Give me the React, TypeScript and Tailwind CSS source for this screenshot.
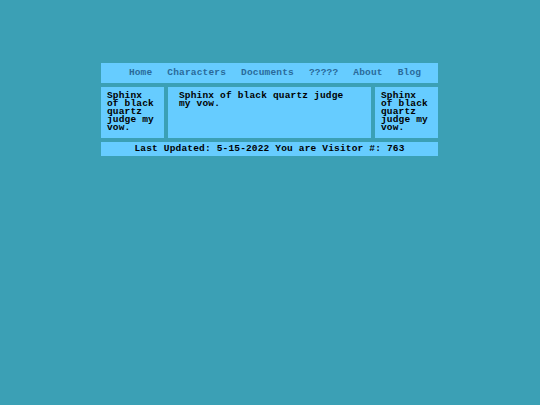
export default function App() {
  const pangram = "Sphinx of black quartz judge my vow.";
  return (
    <div
      className="min-h-screen bg-[#3ba0b5] text-black text-[9.5px] leading-[8px] tracking-[0.17px]"
      style={{ fontFamily: '"Liberation Mono", "DejaVu Sans Mono", monospace' }}
    >
      <div className="w-[337px] ml-[101px] pt-[63px] flex flex-col gap-[4px]">
        <nav className="h-[20px] bg-[#66ccff] flex items-center justify-center gap-[15px] pl-[11px] font-bold text-[#2a6a9a]">
          <a>Home</a>
          <a>Characters</a>
          <a>Documents</a>
          <a>?????</a>
          <a>About</a>
          <a>Blog</a>
        </nav>
        <div className="flex gap-[4px] h-[51px]">
          <aside className="w-[63px] bg-[#66ccff] px-[6px] pt-[5px] font-bold">{pangram}</aside>
          <main className="flex-1 bg-[#66ccff] px-[11px] pt-[5px] font-bold">{pangram}</main>
          <aside className="w-[63px] bg-[#66ccff] px-[6px] pt-[5px] font-bold">{pangram}</aside>
        </div>
        <footer className="h-[14px] bg-[#66ccff] flex items-center justify-center font-bold">
          Last Updated: 5-15-2022 You are Visitor #: 763
        </footer>
      </div>
    </div>
  );
}
